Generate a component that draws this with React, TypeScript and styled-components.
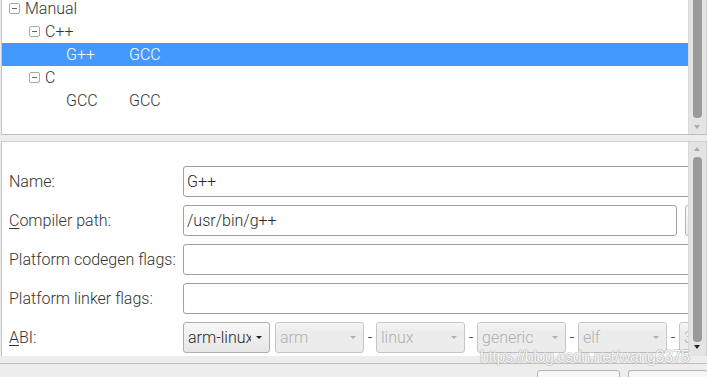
import React from 'react'
import styled, { createGlobalStyle } from 'styled-components'

const GlobalStyle = createGlobalStyle`
  html, body {
    margin: 0;
    padding: 0;
    background: #ededed;
  }
  body {
    font-family: Roboto, "Liberation Sans", sans-serif;
    font-size: 16px;
    font-weight: 300;
    color: #333;
  }
`

const Window = styled.div`
  position: relative;
  width: 707px;
  height: 377px;
  overflow: hidden;
  display: flex;
  flex-direction: column;
  background: #ededed;
`

// tree of toolchains
const TreePanel = styled.div`
  display: flex;
  flex-shrink: 0;
  height: 134px;
  margin-left: 1px;
  background: #fff;
  border-left: 1px solid #c4c4c4;
  border-bottom: 1px solid #b9c2b9;
  overflow: hidden;
`

const TreeBody = styled.div`
  flex: 1;
  margin-top: -3px;
`

interface RowProps {
  readonly selected?: boolean
}

const TreeRow = styled.div<RowProps>`
  display: flex;
  align-items: center;
  height: 23px;
  color: ${(props) => (props.selected ? '#fff' : '#333')};
  background: ${(props) => (props.selected ? '#4499ff' : 'transparent')};
`

interface IndentProps {
  readonly level: number
  readonly leaf?: boolean
}

const Indent = styled.div<IndentProps>`
  width: ${(props) => 7 + props.level * 20 + (props.leaf ? 17 : 0)}px;
  flex-shrink: 0;
`

const Expander = styled.span`
  display: inline-flex;
  align-items: center;
  justify-content: center;
  box-sizing: border-box;
  width: 11px;
  height: 11px;
  border: 1px solid #a8aca8;
  border-radius: 2px;
  margin-right: 5px;
  &::after {
    content: '';
    width: 5px;
    height: 1px;
    background: #666;
  }
`

interface CellProps {
  readonly width?: number
}

const Cell = styled.span<CellProps>`
  width: ${(props) => (props.width ? `${props.width}px` : 'auto')};
  flex-shrink: 0;
  white-space: nowrap;
`

// scrollbars
const Scrollbar = styled.div`
  position: relative;
  width: 17px;
  flex-shrink: 0;
  background: #e4e4e4;
  border-left: 1px solid #dadada;
  border-right: 1px solid #d0d0d0;
`

const Thumb = styled.div`
  position: absolute;
  left: 4px;
  width: 9px;
  border-radius: 4px;
  background: #9a9a9a;
`

interface ArrowProps {
  readonly up?: boolean
  readonly dark?: boolean
}

const Arrow = styled.div<ArrowProps>`
  position: absolute;
  left: 5px;
  width: 0;
  height: 0;
  border-left: 3px solid transparent;
  border-right: 3px solid transparent;
  ${(props) =>
    props.up
      ? `border-bottom: 4px solid ${props.dark ? '#222' : '#aaa'};`
      : `border-top: 4px solid ${props.dark ? '#222' : '#aaa'};`}
`

interface ScrollProps {
  readonly thumbStart: number
  readonly thumbEnd: number
  readonly up?: number
  readonly down?: number
  readonly downDark?: boolean
}

const ScrollBar = ({ thumbStart, thumbEnd, up, down, downDark }: ScrollProps) => (
  <Scrollbar>
    <Thumb style={{ top: thumbStart, height: thumbEnd - thumbStart }} />
    {up !== undefined && <Arrow up style={{ top: up }} />}
    {down !== undefined && <Arrow dark={downDark} style={{ top: down }} />}
  </Scrollbar>
)

const Gap = styled.div`
  height: 6px;
  flex-shrink: 0;
`

// details form
const FormPanel = styled.div`
  display: flex;
  flex-shrink: 0;
  height: 214px;
  margin-left: 1px;
  background: #fff;
  border-top: 1px solid #cfcfcf;
  border-left: 1px solid #c4c4c4;
  overflow: hidden;
`

const FormBody = styled.div`
  flex: 1;
  overflow: hidden;
  padding-top: 24px;
`

const FormGrid = styled.div`
  display: grid;
  grid-template-columns: 181px 560px;
  row-gap: 8px;
  align-items: center;
`

const Label = styled.label`
  padding-left: 7px;
  white-space: nowrap;
  u {
    text-decoration: underline;
    text-underline-offset: 2px;
  }
`

const FieldRow = styled.div`
  display: flex;
  align-items: center;
  gap: 8px;
`

interface InputProps {
  readonly width?: number
}

const TextInput = styled.div<InputProps>`
  box-sizing: border-box;
  height: 31px;
  width: ${(props) => (props.width ? `${props.width}px` : '100%')};
  flex-shrink: 0;
  display: flex;
  align-items: center;
  padding-left: 3px;
  border: 1px solid #a0a0a0;
  border-radius: 3px;
  background: #fff;
  color: #2a2a2a;
`

const BrowseButton = styled.div`
  box-sizing: border-box;
  height: 31px;
  width: 80px;
  flex-shrink: 0;
  border: 1px solid #b4b4b4;
  border-radius: 3px;
  background: linear-gradient(#fafafa, #ececec);
`

const ComboRow = styled.div`
  display: flex;
  align-items: center;
`

interface ComboProps {
  readonly disabled?: boolean
}

const Combo = styled.div<ComboProps>`
  box-sizing: border-box;
  height: 31px;
  width: ${(props) => (props.disabled ? 89 : 87)}px;
  margin-right: ${(props) => (props.disabled ? 0 : 5)}px;
  flex-shrink: 0;
  display: flex;
  align-items: center;
  padding: 0 7px 0 4px;
  border: 1px solid ${(props) => (props.disabled ? '#c6c6c6' : '#adadad')};
  border-radius: 3px;
  background: ${(props) =>
    props.disabled ? 'linear-gradient(#f6f6f6, #ececec 30%, #ececec)' : 'linear-gradient(#f7f7f7, #e6e6e6)'};
  color: ${(props) => (props.disabled ? '#b0b0b0' : '#2a2a2a')};
`

const ComboText = styled.span`
  flex: 1;
  min-width: 0;
  overflow: hidden;
  white-space: nowrap;
  text-overflow: clip;
`

const ComboArrow = styled.span<ComboProps>`
  flex-shrink: 0;
  width: 0;
  height: 0;
  margin-left: 5px;
  border-left: 3px solid transparent;
  border-right: 3px solid transparent;
  border-top: 3px solid ${(props) => (props.disabled ? '#b0b0b0' : '#222')};
`

const Dash = styled.span`
  width: 12px;
  flex-shrink: 0;
  text-align: center;
  color: #333;
`

// bottom strip with the dialog buttons
const BottomStrip = styled.div`
  flex: 1;
  min-height: 0;
  overflow: hidden;
  border-top: 1px solid #c0c0c0;
  margin-top: 7px;
  display: flex;
  justify-content: flex-end;
  gap: 8px;
  padding-top: 6px;
`

const DialogButton = styled.div`
  box-sizing: border-box;
  flex-shrink: 0;
  width: 83px;
  height: 20px;
  border: 1px solid #b4b4b4;
  border-radius: 3px;
  background: #f7f7f7;
  &:last-child {
    width: 79px;
    border-right: none;
  }
`

const Watermark = styled.div`
  position: absolute;
  left: 480px;
  top: 348px;
  font-family: "Liberation Sans", Arial, sans-serif;
  font-size: 16px;
  font-weight: 400;
  letter-spacing: -0.4px;
  color: rgba(255, 255, 255, 0.85);
  text-shadow:
    1px 0 0 rgba(150, 150, 150, 0.35),
    -1px 0 0 rgba(150, 150, 150, 0.35),
    0 1px 0 rgba(150, 150, 150, 0.35),
    0 -1px 0 rgba(150, 150, 150, 0.35);
  white-space: nowrap;
`

const comboValues = ['arm', 'linux', 'generic', 'elf', '32bit']

export default function App() {
  return (
    <Window>
      <GlobalStyle />
      <TreePanel>
        <TreeBody>
          <TreeRow>
            <Indent level={0} />
            <Expander />
            <Cell>Manual</Cell>
          </TreeRow>
          <TreeRow>
            <Indent level={1} />
            <Expander />
            <Cell>C++</Cell>
          </TreeRow>
          <TreeRow selected>
            <Indent level={2} leaf />
            <Cell width={63}>G++</Cell>
            <Cell>GCC</Cell>
          </TreeRow>
          <TreeRow>
            <Indent level={1} />
            <Expander />
            <Cell>C</Cell>
          </TreeRow>
          <TreeRow>
            <Indent level={2} leaf />
            <Cell width={63}>GCC</Cell>
            <Cell>GCC</Cell>
          </TreeRow>
        </TreeBody>
        <ScrollBar thumbStart={-6} thumbEnd={118} down={125} />
      </TreePanel>
      <Gap />
      <FormPanel>
        <FormBody>
          <FormGrid>
            <Label>Name:</Label>
            <TextInput>G++</TextInput>

            <Label>
              <u>C</u>ompiler path:
            </Label>
            <FieldRow>
              <TextInput width={494}>/usr/bin/g++</TextInput>
              <BrowseButton />
            </FieldRow>

            <Label>Platform codegen flags:</Label>
            <TextInput />

            <Label>Platform linker flags:</Label>
            <TextInput />

            <Label>
              <u>A</u>BI:
            </Label>
            <ComboRow>
              <Combo>
                <ComboText>arm-linux</ComboText>
                <ComboArrow />
              </Combo>
              {comboValues.map((v, i) => (
                <React.Fragment key={v}>
                  {i > 0 && <Dash>-</Dash>}
                  <Combo disabled>
                    <ComboText>{v}</ComboText>
                    <ComboArrow disabled />
                  </Combo>
                </React.Fragment>
              ))}
            </ComboRow>
          </FormGrid>
        </FormBody>
        <ScrollBar thumbStart={15} thumbEnd={200} up={5} down={203} downDark />
      </FormPanel>
      <BottomStrip>
        <DialogButton />
        <DialogButton />
      </BottomStrip>
      <Watermark>https://blog.csdn.net/wang3375</Watermark>
    </Window>
  )
}
